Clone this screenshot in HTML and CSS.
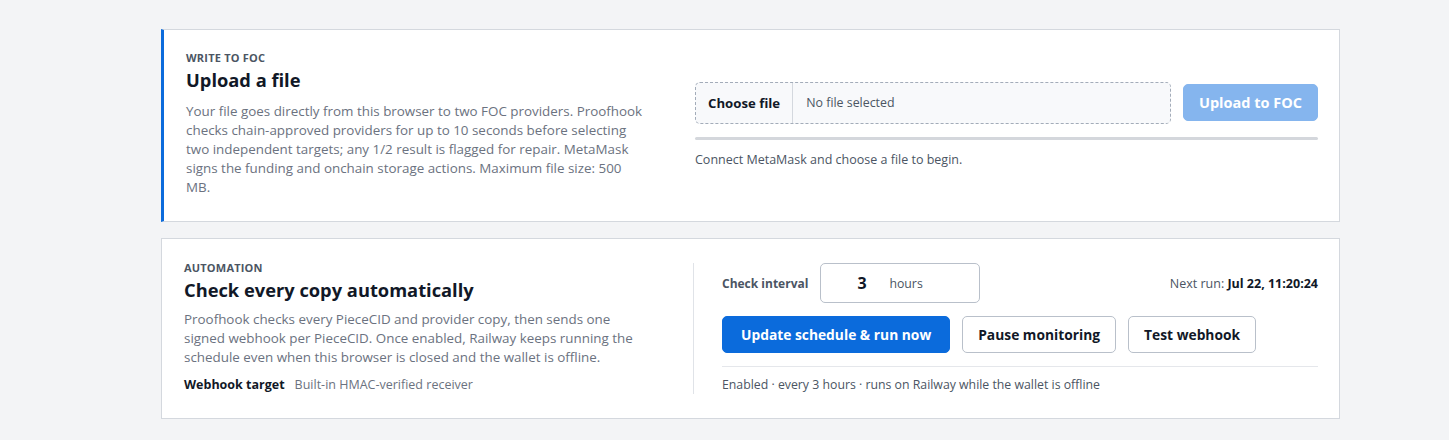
FILE: index.html
```html
<!DOCTYPE html>
<html lang="en">
<head>
<meta charset="utf-8">
<title>Proofhook</title>
<link rel="stylesheet" href="styles.css">
</head>
<body>
<main class="page">
  <section class="card card-accent">
    <div class="card-intro">
      <div class="eyebrow">Write to FOC</div>
      <h2 class="card-title">Upload a file</h2>
      <p class="card-text">Your file goes directly from this browser to two FOC providers. Proofhook checks chain-approved providers for up to 10 seconds before selecting two independent targets; any 1/2 result is flagged for repair. MetaMask signs the funding and onchain storage actions. Maximum file size: 500 MB.</p>
    </div>
    <div class="upload">
      <div class="upload-row">
        <label class="file-picker">
          <span class="file-btn">Choose file</span>
          <span class="file-name">No file selected</span>
        </label>
        <button class="btn btn-primary btn-disabled" disabled>Upload to FOC</button>
      </div>
      <div class="progress"><div class="progress-fill"></div></div>
      <p class="hint">Connect MetaMask and choose a file to begin.</p>
    </div>
  </section>

  <section class="card card-auto">
    <div class="card-intro">
      <div class="eyebrow">Automation</div>
      <h2 class="card-title">Check every copy automatically</h2>
      <p class="card-text">Proofhook checks every PieceCID and provider copy, then sends one signed webhook per PieceCID. Once enabled, Railway keeps running the schedule even when this browser is closed and the wallet is offline.</p>
      <div class="target"><strong>Webhook target</strong><span>Built-in HMAC-verified receiver</span></div>
    </div>
    <div class="schedule">
      <div class="interval-row">
        <span class="interval-label">Check interval</span>
        <div class="interval-box">
          <span class="interval-value">3</span>
          <span class="interval-unit">hours</span>
        </div>
        <span class="next-run">Next run: <strong>Jul 22, 11:20:24</strong></span>
      </div>
      <div class="actions">
        <button class="btn btn-primary btn-run">Update schedule &amp; run now</button>
        <button class="btn btn-outline">Pause monitoring</button>
        <button class="btn btn-outline">Test webhook</button>
      </div>
      <p class="status">Enabled · every 3 hours · runs on Railway while the wallet is offline</p>
    </div>
  </section>
</main>
</body>
</html>
```

FILE: styles.css
```css
* { box-sizing: border-box; }

html, body {
  margin: 0;
  padding: 0;
}

body {
  background: #f3f4f6;
  font-family: "Open Sans", "Noto Sans", "Liberation Sans", sans-serif;
  color: #111827;
}

.page {
  margin: 0 109px 0 161px;
  padding: 29px 0 20px;
  display: flex;
  flex-direction: column;
  gap: 16px;
}

.card {
  background: #ffffff;
  border: 1px solid #d4d8de;
  display: grid;
  grid-template-columns: 461px 1fr;
  column-gap: 48px;
}

.card-accent {
  border-left: 3px solid #0b6bdc;
  padding: 21px 21px 24px 22px;
}

.card-auto {
  padding: 22px 21px 22px 22px;
}

.eyebrow {
  font-size: 11px;
  font-weight: 700;
  text-transform: uppercase;
  color: #4b5563;
  letter-spacing: 0.2px;
  line-height: 14px;
}

.card-title {
  margin: 3px 0 10px;
  font-size: 18.3px;
  font-weight: 700;
  line-height: 24px;
  color: #111827;
}

.card-text {
  margin: 0;
  font-size: 13.4px;
  line-height: 19px;
  color: #6b7280;
}

.card-auto .card-title {
  margin-bottom: 8px;
}

.target {
  margin-top: 9px;
  font-size: 12.5px;
  line-height: 18px;
  display: flex;
  gap: 10px;
}

.target strong {
  color: #111827;
  font-weight: 700;
}

.target span {
  color: #6b7280;
}

/* upload column */
.upload {
  align-self: center;
  padding-top: 2px;
}

.upload-row {
  display: flex;
  align-items: center;
  gap: 12px;
}

.file-picker {
  flex: 1;
  display: flex;
  height: 42px;
  border: 1px dashed #a3acb9;
  border-radius: 5px;
  background: #f8f9fb;
  overflow: hidden;
}

.file-btn {
  display: flex;
  align-items: center;
  padding: 0 12px;
  font-size: 13.2px;
  font-weight: 700;
  color: #111827;
  border-right: 1px solid #d4d8de;
}

.file-name {
  display: flex;
  align-items: center;
  padding: 0 13px;
  font-size: 12.4px;
  color: #4b5563;
}

.btn {
  font-family: inherit;
  font-size: 13.8px;
  font-weight: 700;
  border-radius: 5px;
  padding: 0 15px;
  height: 37px;
  cursor: pointer;
  white-space: nowrap;
}

.btn-primary {
  background: #0b6bdc;
  border: 1px solid #0b6bdc;
  color: #ffffff;
}

.btn-run {
  padding: 0 18px;
}

.btn-disabled {
  background: #85b5ee;
  border-color: #85b5ee;
  cursor: default;
  width: 135px;
  padding: 0;
  font-size: 14.5px;
}

.btn-outline {
  background: #ffffff;
  border: 1px solid #b9c0ca;
  color: #111827;
}

.progress {
  margin-top: 13px;
  height: 3px;
  background: #d4d7dc;
  border-radius: 2px;
}

.progress-fill {
  width: 0;
  height: 100%;
  background: #0b6bdc;
}

.hint {
  margin: 11px 0 0;
  font-size: 12.5px;
  line-height: 18px;
  color: #4b5563;
}

/* schedule column */
.schedule {
  border-left: 1px solid #e0e3e8;
  padding-left: 28px;
  margin: 2px 0;
}

.interval-row {
  display: flex;
  align-items: center;
}

.interval-label {
  font-size: 12px;
  font-weight: 700;
  color: #4b5563;
  margin-right: 12px;
}

.interval-box {
  width: 160px;
  height: 40px;
  border: 1px solid #b9c0ca;
  border-radius: 5px;
  display: flex;
  align-items: center;
  padding-left: 36px;
}

.interval-value {
  font-size: 16px;
  font-weight: 700;
  color: #111827;
  width: 32px;
}

.interval-unit {
  font-size: 12.3px;
  color: #4b5563;
}

.next-run {
  margin-left: auto;
  font-size: 12.5px;
  color: #4b5563;
}

.next-run strong {
  color: #111827;
  font-weight: 700;
}

.actions {
  display: flex;
  gap: 12px;
  margin-top: 13px;
}

.status {
  margin: 13px 0 0;
  padding-top: 9px;
  border-top: 1px solid #e5e7eb;
  font-size: 12.3px;
  line-height: 18px;
  color: #4b5563;
}
```
